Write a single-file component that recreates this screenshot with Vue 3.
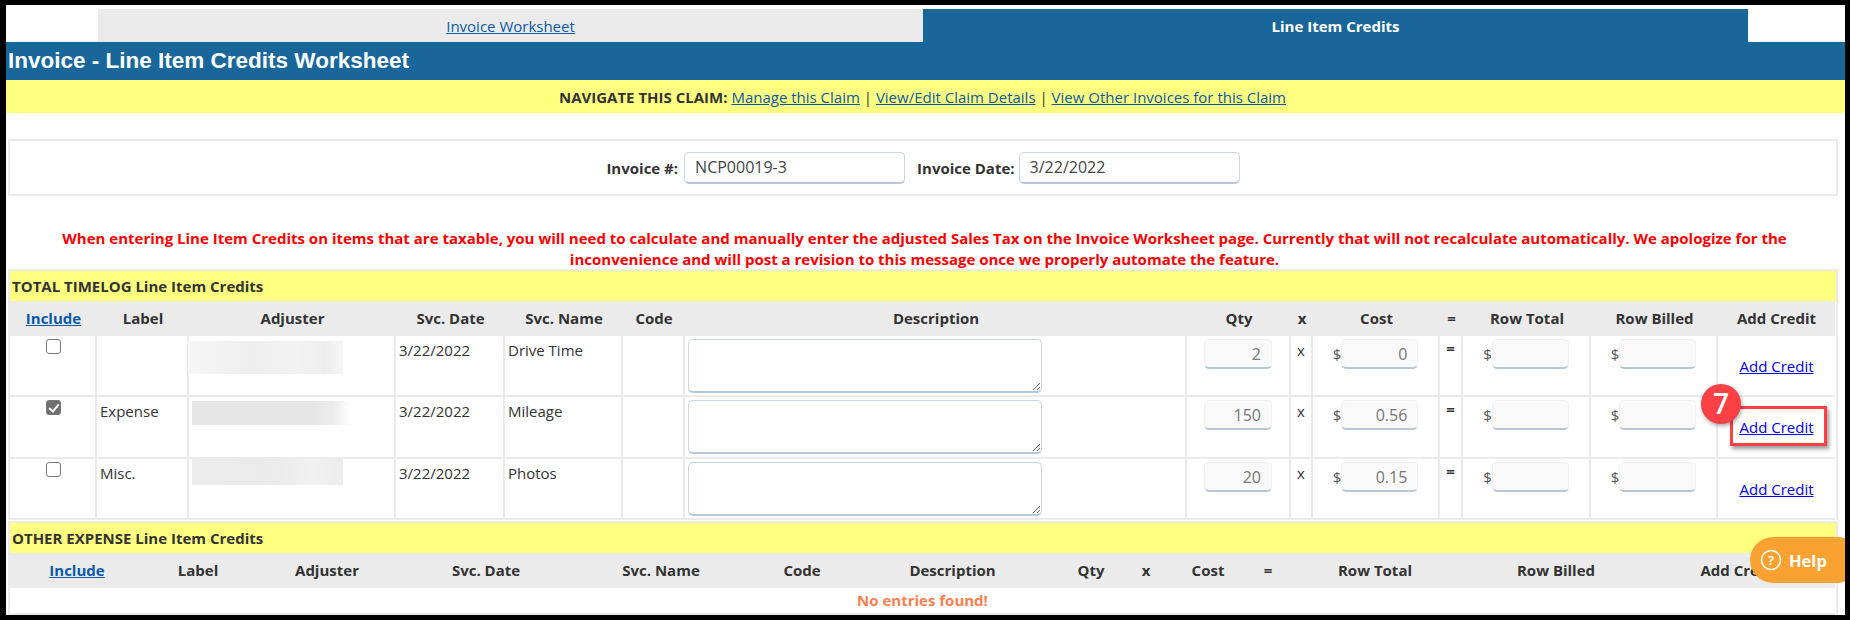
<template>
  <div class="frame">
    <div class="tabs">
      <div class="tab"><a href="#">Invoice Worksheet</a></div>
      <div class="tab active">Line Item Credits</div>
    </div>
    <h1 class="title">Invoice - Line Item Credits Worksheet</h1>
    <div class="nav">
      <b>NAVIGATE THIS CLAIM:</b>&nbsp;<a href="#">Manage this Claim</a> | <a href="#">View/Edit Claim Details</a> | <a href="#">View Other Invoices for this Claim</a>
    </div>

    <div class="invoice-box">
      <label>Invoice #:</label>
      <input class="top-input" value="NCP00019-3" />
      <label class="second">Invoice Date:</label>
      <input class="top-input" value="3/22/2022" />
    </div>

    <p class="warning">
      When entering Line Item Credits on items that are taxable, you will need to calculate and manually enter the adjusted Sales Tax on the Invoice Worksheet page. Currently that will not recalculate automatically. We apologize for the inconvenience and will post a revision to this message once we properly automate the feature.
    </p>

    <section class="section">
      <div class="section-title">TOTAL TIMELOG Line Item Credits</div>
      <table>
        <colgroup>
          <col v-for="(w, i) in timelogCols" :key="i" :style="{ width: w + 'px' }" />
        </colgroup>
        <thead>
          <tr>
            <th v-for="(h, i) in headers" :key="h">
              <a v-if="i === 0" href="#">{{ h }}</a>
              <template v-else>{{ h }}</template>
            </th>
          </tr>
        </thead>
        <tbody>
          <tr v-for="row in rows" :key="row.name">
            <td class="center"><input type="checkbox" class="check" :checked="row.checked" /></td>
            <td>{{ row.label }}</td>
            <td class="adjuster"><div class="blur" :class="row.blur"></div></td>
            <td>3/22/2022</td>
            <td>{{ row.name }}</td>
            <td></td>
            <td class="desc"><textarea></textarea></td>
            <td class="center"><input class="num qty" readonly :value="row.qty" /></td>
            <td class="center">x</td>
            <td class="cell-money"><div class="money">$<input class="num" readonly :value="row.cost" /></div></td>
            <td class="center eq">=</td>
            <td class="cell-money"><div class="money">$<input class="num" readonly /></div></td>
            <td class="cell-money"><div class="money">$<input class="num" readonly /></div></td>
            <td class="center add"><a href="#">Add Credit</a></td>
          </tr>
        </tbody>
      </table>
    </section>

    <section class="section other">
      <div class="section-title">OTHER EXPENSE Line Item Credits</div>
      <table>
        <colgroup>
          <col v-for="(w, i) in otherCols" :key="i" :style="{ width: w + 'px' }" />
        </colgroup>
        <thead>
          <tr>
            <th v-for="(h, i) in headers" :key="h">
              <a v-if="i === 0" href="#">{{ h }}</a>
              <template v-else>{{ h }}</template>
            </th>
          </tr>
        </thead>
        <tbody>
          <tr>
            <td class="empty" colspan="14">No entries found!</td>
          </tr>
        </tbody>
      </table>
    </section>

    <!-- annotation over the second row -->
    <div class="callout-box"></div>
    <div class="callout-num">7</div>

    <div class="help">
      <svg width="22" height="22" viewBox="0 0 22 22">
        <circle cx="11" cy="11" r="9.5" fill="none" stroke="#fff" stroke-width="1.5" />
        <text x="11" y="15.5" text-anchor="middle" font-size="13" font-weight="600" fill="#fff">?</text>
      </svg>
      <span>Help</span>
    </div>
  </div>
</template>

<script setup>
const headers = ['Include', 'Label', 'Adjuster', 'Svc. Date', 'Svc. Name', 'Code', 'Description', 'Qty', 'x', 'Cost', '=', 'Row Total', 'Row Billed', 'Add Credit']

const timelogCols = [87, 92, 207, 109, 118, 62, 502, 104, 22, 127, 23, 128, 127, 117]
const otherCols = [134, 108, 150, 168, 182, 100, 201, 76, 34, 90, 30, 184, 178, 190]

const rows = [
  { checked: false, label: '', name: 'Drive Time', qty: '2', cost: '0', blur: 'b1' },
  { checked: true, label: 'Expense', name: 'Mileage', qty: '150', cost: '0.56', blur: 'b2' },
  { checked: false, label: 'Misc.', name: 'Photos', qty: '20', cost: '0.15', blur: 'b3' }
]
</script>

<style>
html, body {
  margin: 0;
  background: #000;
}
</style>

<style scoped>
.frame {
  position: relative;
  width: 1850px;
  height: 620px;
  box-sizing: border-box;
  border: solid #000;
  border-width: 5px 5px 5px 6px;
  background: #fff;
  overflow: hidden;
  font-family: "Open Sans", sans-serif;
  font-size: 15px;
  color: #333;
}

a {
  color: #0b5aa8;
  text-decoration: underline;
}

.tabs {
  display: flex;
  padding: 4px 97px 0 92px;
}

.tab {
  flex: 1;
  height: 33px;
  line-height: 35px;
  text-align: center;
  background: #ebebeb;
}

.tab.active {
  background: #19679a;
  color: #fff;
  font-weight: 700;
}

.title {
  margin: 0;
  height: 38px;
  line-height: 38px;
  padding-left: 2px;
  background: #19679a;
  color: #fff;
  font-family: "Liberation Sans", Arial, sans-serif;
  font-size: 22.5px;
  font-weight: 700;
}

.nav {
  height: 33px;
  line-height: 34px;
  padding-right: 6px;
  text-align: center;
  background: #ffff80;
}

.invoice-box {
  display: flex;
  align-items: center;
  justify-content: center;
  gap: 6px;
  height: 53px;
  margin: 26px 7px 0 2px;
  border: 2px solid #ebebeb;
  font-weight: 700;
}

.invoice-box .second {
  margin: 0 -2px 0 6px;
}

.top-input {
  width: 221px;
  height: 32px;
  box-sizing: border-box;
  padding: 0 10px;
  border: 1px solid #c9d6e2;
  border-bottom: 2px solid #b4c8da;
  border-radius: 5px;
  background: #fff;
  color: #444;
  font-family: inherit;
  font-size: 16px;
  outline: none;
}

.warning {
  margin: 32px 0 -1px;
  padding: 0 52px 0 50px;
  line-height: 21px;
  text-align: center;
  font-weight: 700;
  color: #f00;
}

.section {
  margin: 0 7px 0 2px;
  border: 2px solid #ebebeb;
  border-bottom: 0;
}

.section.other {
  margin-top: 1px;
}

.section-title {
  height: 30px;
  line-height: 30px;
  padding-left: 2px;
  background: #ffff80;
  font-weight: 700;
}

table {
  width: 1825px;
  table-layout: fixed;
  border-collapse: separate;
  border-spacing: 0;
}

th {
  height: 35px;
  padding: 0 0 2px;
  box-sizing: border-box;
  background: #ebebeb;
  font-weight: 700;
  text-align: center;
}

td {
  height: 61px;
  box-sizing: border-box;
  padding: 4px 3px 0;
  vertical-align: top;
  line-height: 20px;
  border-right: 2px solid #ebebeb;
  border-bottom: 2px solid #ebebeb;
}

td:last-child {
  border-right: 0;
}

tbody tr:nth-child(2) td {
  height: 62px;
}

.center {
  text-align: center;
}

.eq {
  font-weight: 700;
  padding-top: 2px;
}

.adjuster {
  padding: 0;
}

.blur {
  height: 24px;
}

.blur.b1 {
  width: 155px;
  height: 33px;
  margin: 5px 0 0 -1px;
  background: linear-gradient(90deg, #f6f6f6, #eeeeee 40%, #f2f2f2 70%, #eeeeee 88%, #f6f6f6);
}

.blur.b2 {
  width: 160px;
  margin: 4px 0 0 3px;
  background: linear-gradient(90deg, #e6e6e6, #e6e6e6 75%, #ececec 88%, #ffffff);
}

.blur.b3 {
  width: 151px;
  height: 26px;
  margin-left: 3px;
  background: linear-gradient(90deg, #ececec, #ebebeb 55%, #f1f1f1 80%, #ececec);
}

.check {
  appearance: none;
  display: block;
  position: relative;
  width: 15px;
  height: 15px;
  box-sizing: border-box;
  margin: -1px auto 0 33px;
  border: 1px solid #777;
  border-radius: 3px;
  background: #fff;
}

.check:checked {
  background: #6f6f6f;
}

.check:checked::after {
  content: "";
  position: absolute;
  left: 4px;
  top: 1px;
  width: 4px;
  height: 8px;
  border: solid #fff;
  border-width: 0 2px 2px 0;
  transform: rotate(40deg);
}

.desc {
  padding-top: 3px;
}

textarea {
  display: block;
  width: 354px;
  height: 54px;
  box-sizing: border-box;
  margin: 0;
  border: 1px solid #c9d6e2;
  border-bottom: 2px solid #b4c8da;
  border-radius: 5px;
  background: #fff;
  outline: none;
}

.cell-money {
  padding-top: 3px;
}

.money {
  display: flex;
  justify-content: center;
  align-items: center;
  color: #555;
}

.num {
  width: 77px;
  height: 30px;
  box-sizing: border-box;
  padding: 0 10px;
  border: 1px solid #f0f0f0;
  border-bottom: 2px solid #b4c8da;
  border-radius: 5px;
  background: #f9f9f9;
  color: #777;
  font-family: inherit;
  font-size: 16px;
  text-align: right;
  outline: none;
}

.qty {
  display: block;
  width: 68px;
  margin: -1px auto 0;
}

.add {
  vertical-align: middle;
  padding-top: 0;
}

.add a {
  color: #0000ee;
}

.empty {
  height: 27px;
  padding: 2px 0 0;
  text-align: center;
  font-weight: 700;
  color: #ff7f50;
}

.callout-box {
  position: absolute;
  left: 1724px;
  top: 401px;
  width: 97px;
  height: 40px;
  box-sizing: border-box;
  border: 3px solid #fb4145;
  box-shadow: 2px 3px 4px rgba(0, 0, 0, 0.4);
}

.callout-num {
  position: absolute;
  left: 1695px;
  top: 379px;
  width: 40px;
  height: 40px;
  border-radius: 50%;
  background: #fb4145;
  box-shadow: 1px 2px 4px rgba(0, 0, 0, 0.35);
  color: #fff;
  font-family: "Open Sans", sans-serif;
  font-size: 28px;
  font-weight: 600;
  line-height: 38px;
  text-align: center;
}

.help {
  position: absolute;
  left: 1744px;
  top: 532px;
  width: 110px;
  height: 46px;
  display: flex;
  align-items: center;
  gap: 7px;
  box-sizing: border-box;
  padding-left: 10px;
  border-radius: 23px;
  background: #f9a232;
  color: #fff;
  font-size: 16.5px;
  font-weight: 700;
}
</style>
